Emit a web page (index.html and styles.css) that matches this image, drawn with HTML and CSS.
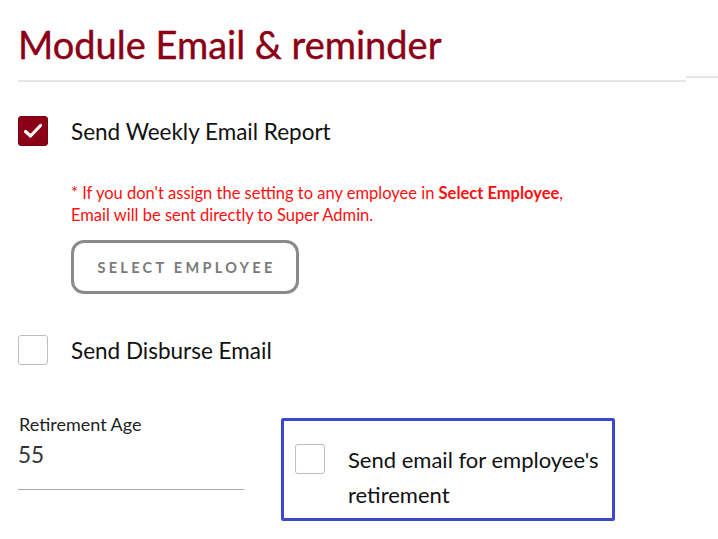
FILE: index.html
```html
<!DOCTYPE html>
<html lang="en">
<head>
    <meta charset="UTF-8">
    <meta name="viewport" content="width=device-width, initial-scale=1.0">
    <title>Module Email &amp; reminder</title>
    <link rel="stylesheet" href="styles.css">
</head>
<body>
    <div class="page">
        <div class="header">
            <h1 class="title">Module Email &amp; reminder</h1>
            <div class="divider"></div>
        </div>
        <div class="edge-line"></div>

        <div class="option option-weekly">
            <span class="check checked">
                <svg width="20" height="16" viewBox="0 0 20 16"><path d="M2.5 8.5 L7.5 13 L17.5 2.5" fill="none" stroke="#fff" stroke-width="3.2" stroke-linecap="round" stroke-linejoin="round"/></svg>
            </span>
            <span class="label">Send Weekly Email Report</span>
        </div>

        <div class="note-block">
            <p class="note">* If you don't assign the setting to any employee in <b>Select Employee</b>,<br>Email will be sent directly to Super Admin.</p>
            <button class="select-btn">SELECT EMPLOYEE</button>
        </div>

        <div class="option option-disburse">
            <span class="check"></span>
            <span class="label">Send Disburse Email</span>
        </div>

        <div class="bottom-row">
            <div class="field">
                <label class="field-label">Retirement Age</label>
                <div class="field-value">55</div>
            </div>
            <div class="retire-box">
                <span class="check"></span>
                <span class="label">Send email for employee's<br>retirement</span>
            </div>
        </div>
    </div>
</body>
</html>
```

FILE: styles.css
```css
body {
    margin: 0;
    font-family: Lato, "Noto Sans", sans-serif;
    background-color: #fff;
    color: #111;
}

.page {
    position: relative;
    padding: 0 0 0 18px;
}

.header {
    width: 668px;
}

.title {
    margin: 0;
    padding-top: 21px;
    font-size: 38px;
    font-weight: 400;
    line-height: 46px;
    color: #8b0016;
    -webkit-text-stroke: 0.4px #8b0016;
}

.divider {
    margin-top: 13px;
    height: 2px;
    background-color: #e6e6e6;
}

.edge-line {
    position: absolute;
    top: 76px;
    left: 686px;
    right: 0;
    height: 2px;
    background-color: #e6e6e6;
}

.option {
    display: flex;
    align-items: center;
}

.option-weekly {
    margin-top: 34px;
}

.check {
    width: 30px;
    height: 30px;
    box-sizing: border-box;
    border: 1px solid #bdbdbd;
    border-radius: 3px;
    background: #fff;
    display: flex;
    align-items: center;
    justify-content: center;
    flex-shrink: 0;
}

.check.checked {
    background-color: #8b0016;
    border-color: #7a0013;
}

.label {
    margin-left: 23px;
    font-size: 22.5px;
    color: #111;
}

.note-block {
    padding-left: 53px;
    margin-top: 36px;
}

.note {
    margin: 0;
    font-size: 16.5px;
    line-height: 22px;
    color: #ff1010;
}

.note b {
    font-weight: 700;
}

.select-btn {
    margin-top: 14px;
    width: 228px;
    height: 54px;
    border: 3px solid #8a8a8a;
    border-radius: 13px;
    background: #fff;
    font-family: Lato, "Noto Sans", sans-serif;
    font-size: 14.5px;
    font-weight: 700;
    letter-spacing: 3.3px;
    color: #7a7a7a;
    padding: 0 0 0 3px;
}

.option-disburse {
    margin-top: 41px;
}

.bottom-row {
    display: flex;
    align-items: flex-start;
    margin-top: 53px;
}

.field {
    width: 226px;
    margin-top: -5px;
    border-bottom: 1px solid #a8a8a8;
}

.field-label {
    display: block;
    padding-left: 1px;
    font-size: 18px;
    line-height: 22px;
    color: #222;
}

.field-value {
    margin-top: 5px;
    font-size: 22.5px;
    line-height: 30px;
    color: #333;
    padding-bottom: 19px;
}

.retire-box {
    margin-left: 37px;
    width: 334px;
    height: 103px;
    box-sizing: border-box;
    border: 3px solid #3f48cc;
    border-radius: 2px;
    display: flex;
    align-items: flex-start;
    padding: 23px 0 0 11px;
}

.retire-box .label {
    margin-top: -2px;
    font-size: 22px;
    line-height: 35px;
}
```
